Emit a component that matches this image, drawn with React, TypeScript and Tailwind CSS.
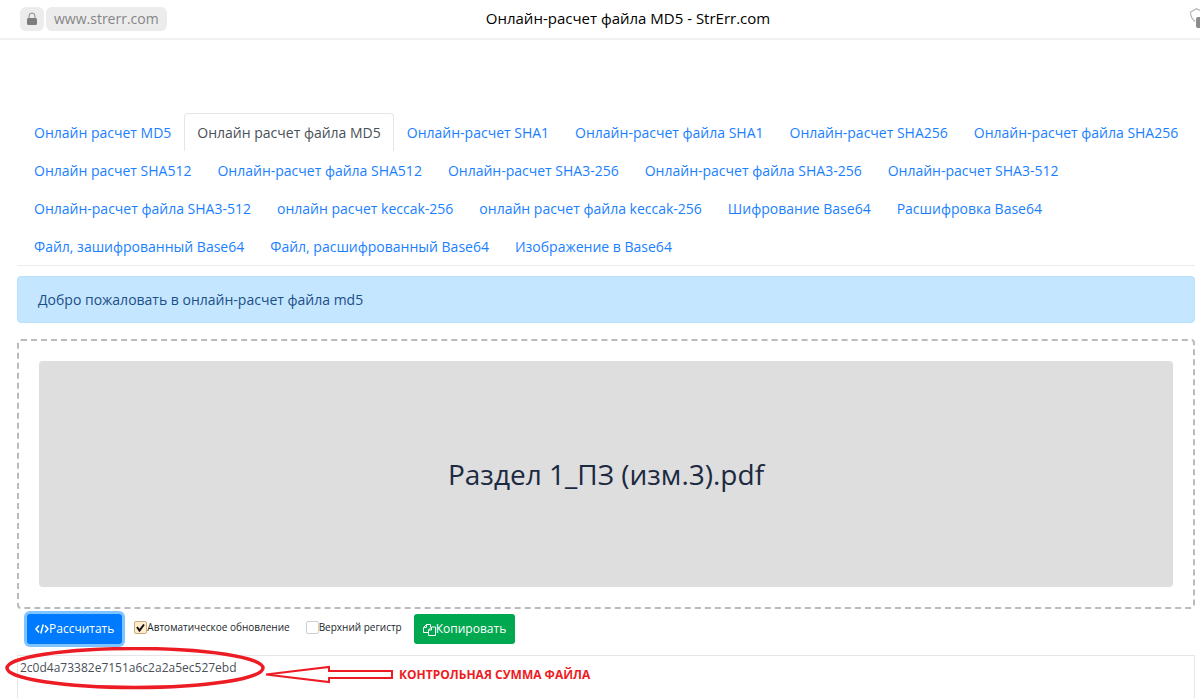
import React, { useState } from "react";
import clsx from "clsx";

const TAB_ROWS = [
  [
    "Онлайн расчет MD5",
    "Онлайн расчет файла MD5",
    "Онлайн-расчет SHA1",
    "Онлайн-расчет файла SHA1",
    "Онлайн-расчет SHA256",
    "Онлайн-расчет файла SHA256",
  ],
  [
    "Онлайн расчет SHA512",
    "Онлайн-расчет файла SHA512",
    "Онлайн-расчет SHA3-256",
    "Онлайн-расчет файла SHA3-256",
    "Онлайн-расчет SHA3-512",
  ],
  [
    "Онлайн-расчет файла SHA3-512",
    "онлайн расчет keccak-256",
    "онлайн расчет файла keccak-256",
    "Шифрование Base64",
    "Расшифровка Base64",
  ],
  ["Файл, зашифрованный Base64", "Файл, расшифрованный Base64", "Изображение в Base64"],
];

const ACTIVE_TAB = "Онлайн расчет файла MD5";

function BrowserBar() {
  return (
    <header className="relative flex h-10 items-center justify-between overflow-hidden border-b-2 border-[#f1f1f1] pl-5 text-sm">
      <div className="flex items-center gap-[2px]">
        <button
          type="button"
          aria-label="Защищённое соединение"
          className="flex h-6 w-6 items-center justify-center rounded-md bg-[#ececec]"
        >
          <svg width="12" height="14" viewBox="0 0 12 14" fill="none">
            <path d="M3 7V4a3 3 0 0 1 6 0v3" stroke="#888" strokeWidth="1" />
            <rect x="1" y="6" width="10" height="7" rx="1.5" fill="#7d7d7d" />
          </svg>
        </button>
        <a
          href="#"
          className="flex h-6 items-center rounded-md bg-[#ececec] px-2 text-sm text-[#858585]"
        >
          www.strerr.com
        </a>
      </div>
      <h1 className="pointer-events-none absolute inset-x-0 pl-14 text-center text-[15px] text-black">
        Онлайн-расчет файла MD5 - StrErr.com
      </h1>
      <svg width="11" height="22" viewBox="0 0 11 22" fill="none">
        <path
          d="M6 13.5C3 11 1.500 8 1.500 4L3.500 3 7.500 0.800 11 2.500"
          stroke="#b5b5b5"
          strokeWidth="1.200"
        />
        <path d="M11 9H9a2 2 0 0 0-2 2v7a2 2 0 0 0 2 2h2z" fill="#8c8c8c" />
      </svg>
    </header>
  );
}

function Tabs() {
  return (
    <nav className="border-b border-[#e9ecef]">
      {TAB_ROWS.map((row) => (
        <ul key={row[0]} className="flex h-[38px] pl-1">
          {row.map((tab) => (
            <li key={tab}>
              <a
                href="#"
                aria-current={tab === ACTIVE_TAB ? "page" : undefined}
                className={clsx(
                  "flex h-full items-center whitespace-nowrap rounded-t border border-b-0 px-3 text-sm",
                  tab === ACTIVE_TAB
                    ? "border-[#e3e7ea] text-[#495057]"
                    : "border-transparent text-[#1a7fff]"
                )}
              >
                {tab}
              </a>
            </li>
          ))}
        </ul>
      ))}
    </nav>
  );
}

function Check({
  label,
  checked,
  onChange,
}: {
  label: string;
  checked: boolean;
  onChange: (v: boolean) => void;
}) {
  return (
    <label className="flex items-center whitespace-nowrap text-[10px] text-[#212529]">
      <span className="relative flex">
        <input
          type="checkbox"
          checked={checked}
          onChange={(e) => onChange(e.target.checked)}
          className="h-[13px] w-[13px] appearance-none rounded-xs border border-[#cfcfcf] bg-white checked:border-[#c9ac80] checked:bg-[#ffeccb]"
        />
        {checked && (
          <svg
            className="pointer-events-none absolute inset-0"
            width="13"
            height="13"
            viewBox="0 0 13 13"
            fill="none"
          >
            <path d="M3 6l2.500 3.500L10 3.500" stroke="#111" strokeWidth="2" />
          </svg>
        )}
      </span>
      {label}
    </label>
  );
}

// ellipse and arrow pointing at the checksum
function Callout() {
  return (
    <div className="pointer-events-none absolute -top-2 -left-3 flex items-center gap-1">
      <svg width="390" height="44" viewBox="0 0 390 44" fill="none" stroke="#ed1c24">
        <ellipse cx="130" cy="21" rx="128" ry="19.500" strokeWidth="3.500" />
        <path d="M261 27.500L324 20v4h63v7h-63v4z" strokeWidth="2" />
      </svg>
      <strong className="mt-3 whitespace-nowrap text-xs font-bold text-[#ed1c24]">
        КОНТРОЛЬНАЯ СУММА ФАЙЛА
      </strong>
    </div>
  );
}

export default function App() {
  const [auto, setAuto] = useState(true);
  const [upper, setUpper] = useState(false);
  const [hash, setHash] = useState("2c0d4a73382e7151a6c2a2a5ec527ebd");

  return (
    <div className="flex min-h-screen flex-col bg-white font-['Open_Sans','Noto_Sans',sans-serif]">
      <BrowserBar />

      <main className="flex flex-1 flex-col pt-[73px] pr-[5px] pl-[17px]">
        <Tabs />

        <div
          role="alert"
          className="mt-[10px] flex h-[47px] items-center rounded border border-[#b8e0ff] bg-[#c5e6ff] px-5 text-sm text-[#1a4f87]"
        >
          Добро пожаловать в онлайн-расчет файла md5
        </div>

        <div className="mt-4 rounded border-2 border-dashed border-[#bbb] p-5">
          <button
            type="button"
            className="flex h-[226px] w-full items-center justify-center rounded bg-[#dedede] text-[28px] text-[#1b2a41]"
          >
            Раздел 1_ПЗ (изм.3).pdf
          </button>
        </div>

        <div className="flex h-[46px] items-center pb-[6px] pl-[10px]">
          <button
            type="button"
            className="flex h-[30px] items-center rounded-[3px] bg-[#007bff] px-2 text-xs text-white ring-3 ring-[#80c4ff]"
          >
            <svg width="14" height="12" viewBox="0 0 14 12" fill="none" stroke="#fff" strokeWidth="1.500">
              <path d="M4 2.500L1 6l3 3.500M10 2.500L13 6l-3 3.500M8.200 1.500L5.800 10.500" />
            </svg>
            Рассчитать
          </button>
          <div className="ml-3 flex gap-4 pb-[3px]">
            <Check label="Автоматическое обновление" checked={auto} onChange={setAuto} />
            <Check label="Верхний регистр" checked={upper} onChange={setUpper} />
          </div>
          <button
            type="button"
            className="ml-3 flex h-[30px] items-center rounded-[3px] bg-[#00a84f] px-[9px] text-xs text-white"
            onClick={() => navigator.clipboard.writeText(hash)}
          >
            <svg width="13" height="13" viewBox="0 0 13 13" fill="none" stroke="#fff" strokeWidth="1">
              <path d="M5 9.500H0.500V4.500L3.500 1.500H7.500V4M3.500 1.500V4.500H0.500" />
              <path d="M8.500 4H12.500V12.500H5.500V7L8.500 4V7H5.500" />
            </svg>
            Копировать
          </button>
        </div>

        <div className="relative flex flex-1">
          <textarea
            aria-label="Контрольная сумма"
            value={hash}
            onChange={(e) => setHash(e.target.value)}
            rows={1}
            className="w-full resize-none border border-b-0 border-[#e6e6e6] px-[2px] py-1 text-xs text-[#495057] outline-none"
          />
          <Callout />
        </div>
      </main>
    </div>
  );
}
